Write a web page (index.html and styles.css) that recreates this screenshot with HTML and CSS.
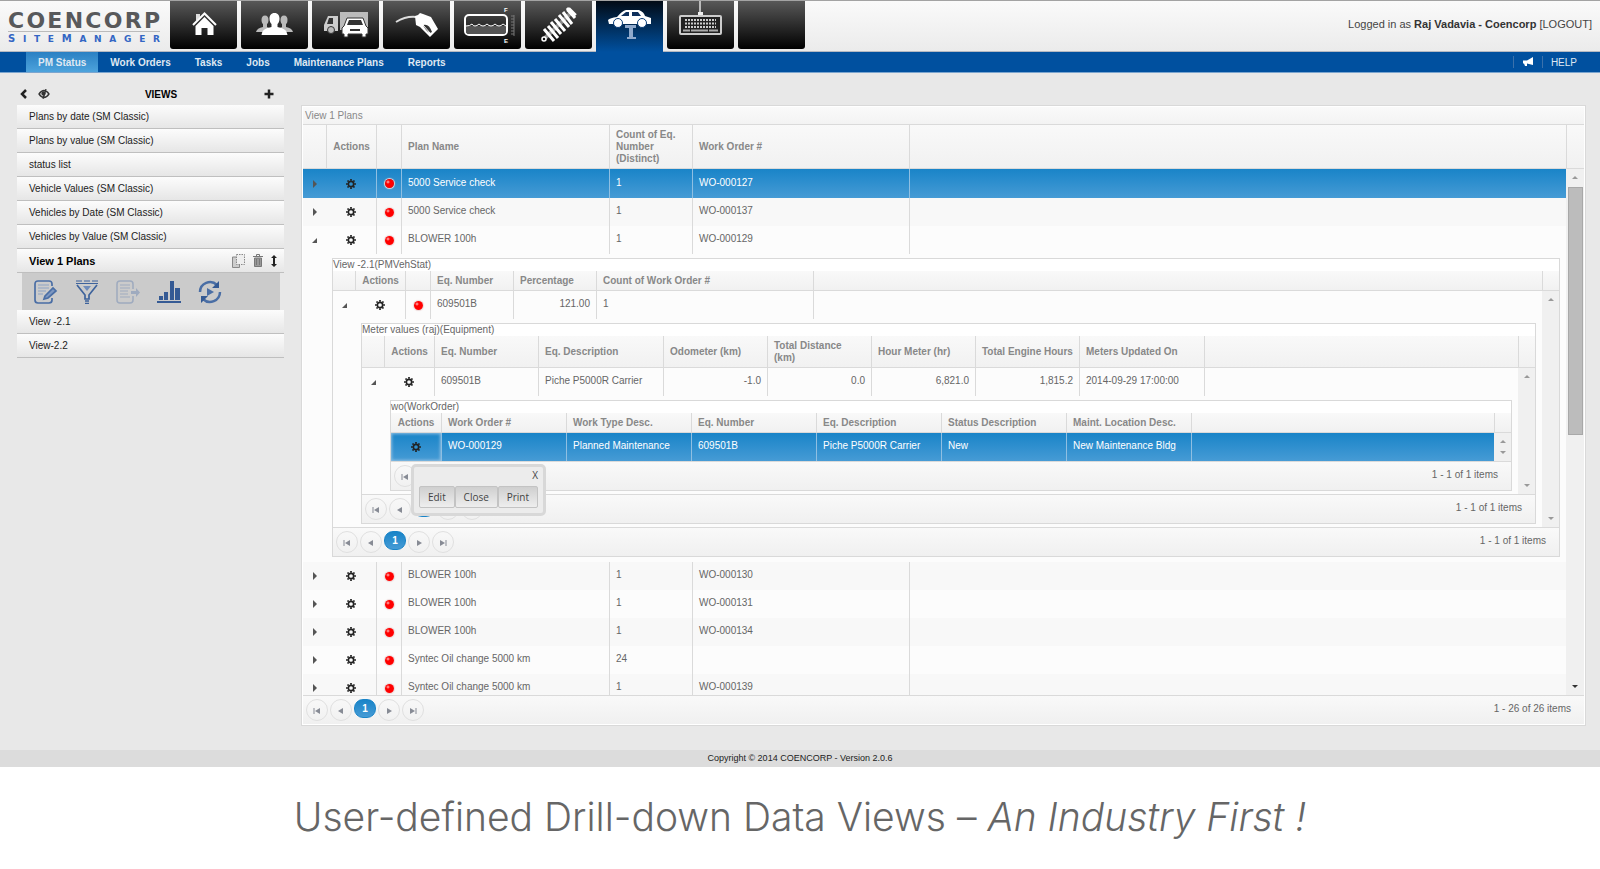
FILE: index.html
```html
<!DOCTYPE html>
<html lang="en">
<head>
    <meta charset="UTF-8">
    <meta name="viewport" content="width=device-width, initial-scale=1.0">
    <title>Coencorp SiteManager - PM Status</title>
    <link rel="stylesheet" href="styles.css">
</head>
<body>
    <!-- Shared icons -->
    <svg width="0" height="0" class="sprite" aria-hidden="true">
        <symbol id="gear" viewBox="0 0 10 10">
            <circle cx="5" cy="5" r="2.7" fill="none" stroke="currentColor" stroke-width="1.7"/>
            <path d="M5 0v1.8M5 8.2V10M0 5h1.8M8.2 5H10M1.5 1.5l1.2 1.2M7.3 7.3l1.2 1.2M1.5 8.5l1.2-1.2M7.3 2.7l1.2-1.2" stroke="currentColor" stroke-width="1.7"/>
        </symbol>
        <symbol id="first" viewBox="0 0 8 8"><path d="M1 1v6" stroke="currentColor"/><path d="M7 1v6L2 4z" fill="currentColor"/></symbol>
        <symbol id="prev" viewBox="0 0 8 8"><path d="M6 1v6L1 4z" fill="currentColor"/></symbol>
        <symbol id="next" viewBox="0 0 8 8"><path d="M2 1v6l5-3z" fill="currentColor"/></symbol>
        <symbol id="last" viewBox="0 0 8 8"><path d="M7 1v6" stroke="currentColor"/><path d="M1 1v6l5-3z" fill="currentColor"/></symbol>
        <symbol id="closed" viewBox="0 0 8 8"><path d="M2 0v8l4-4z" fill="currentColor"/></symbol>
        <symbol id="open" viewBox="0 0 8 8"><path d="M6 2v5H1z" fill="currentColor"/></symbol>
    </svg>

    <header class="header">
        <a class="logo" href="#" aria-label="Coencorp SiteManager">
            <span class="logo-name"><span>C</span><span>O</span><span>E</span><span>N</span><span>C</span><span>O</span><span>R</span><span>P</span></span>
            <span class="logo-product"><span class="big">S</span><span>I</span><span>T</span><span>E</span><span class="big">M</span><span>A</span><span>N</span><span>A</span><span>G</span><span>E</span><span>R</span></span>
        </a>
        <nav class="tiles">
            <a href="#" class="tile" aria-label="Home">
                <svg viewBox="0 0 67 48" fill="#fff">
                    <path d="M26 13h4v3l-4 4z" fill="#ddd"/>
                    <path d="M34.500 16l9 9v9h-6v-7h-6v7h-6v-9z"/>
                    <path d="M23 24l11.500-11.500L46 24" fill="none" stroke="#fff" stroke-width="2"/>
                </svg>
            </a>
            <a href="#" class="tile" aria-label="Users">
                <svg viewBox="0 0 67 48" fill="#bbb">
                    <ellipse cx="24" cy="19" rx="3.500" ry="4.500"/>
                    <ellipse cx="43" cy="19" rx="3.500" ry="4.500"/>
                    <path d="M15 31q1-4 7-5v-4h4v4l3 2-5 3zM52 31q-1-4-7-5v-4h-4v4l-3 2 5 3z"/>
                    <path fill="#fff" d="M33.500 12c3.500 0 5 2.500 5 5.500s-1 4.500-2 5.500v3c5 1 9 2 10 8h-26c1-6 5-7 10-8v-3c-1-1-2-2.500-2-5.500s1.500-5.500 5-5.500z"/>
                </svg>
            </a>
            <a href="#" class="tile" aria-label="Vehicles">
                <svg viewBox="0 0 67 48">
                    <path d="M28 11h28v18H28z" fill="#bbb"/>
                    <path d="M12 24l4-9h10v15H12z" fill="#ccc"/>
                    <path d="M17 17h4v6h-6z" fill="#333"/>
                    <circle cx="19" cy="29" r="3.500" fill="#bbb" stroke="#333"/>
                    <path d="M35 17h16l3 8 2 2v6h-2v3h-4v-3H36v3h-4v-3h-2v-6l2-2z" fill="#fff" stroke="#333"/>
                    <path d="M37 19h12l2 5H35zM38 28h10v2H38z" fill="#333"/>
                </svg>
            </a>
            <a href="#" class="tile" aria-label="Fuel">
                <svg viewBox="0 0 67 48">
                    <path d="M13 21q10-6 20-5" fill="none" stroke="#ddd" stroke-width="2"/>
                    <path d="M32 15l3-1 2-2 3 1 8 3 7 12-8 8-10-10-4-2z" fill="#fff"/>
                    <path d="M40 24q6-2 9 7l-2 1q-5-3-7-8z" fill="#333"/>
                    <path d="M40 24l7 8" stroke="#fff"/>
                </svg>
            </a>
            <a href="#" class="tile" aria-label="Tanks">
                <svg viewBox="0 0 67 48">
                    <rect x="11" y="14" width="42" height="20" rx="4" fill="none" stroke="#fff" stroke-width="2"/>
                    <path d="M12 25h40v5q0 3-3 3H15q-3 0-3-3z" fill="#555"/>
                    <path d="M12 25q4 0 6-2 1 2 3 2t4-2q2 2 4 2t4-2q2 2 4 2t4-2q2 2 4 2t4-2l3 2" fill="none" stroke="#fff"/>
                    <path d="M60 14v21M57 15h3M57 18h3M57 21h3M57 24h3M57 27h3M57 30h3M57 33h3" stroke="#777"/>
                    <text x="50" y="11" class="gauge">F</text>
                    <text x="50" y="42" class="gauge">E</text>
                </svg>
            </a>
            <a href="#" class="tile" aria-label="Parts">
                <svg viewBox="0 0 67 48" fill="none" stroke="#fff">
                    <path d="M20 37L48 10" stroke="#888" stroke-width="4"/>
                    <path d="M19 28l10 12M23 25l10 12M26 21l10 12M30 18l10 12M34 14l10 12M38 11l9 12M42 7l8 10" stroke-width="3"/>
                    <path d="M43 8l7 7" stroke-width="5"/>
                    <circle cx="19" cy="38" r="2" stroke-width="1.500"/>
                </svg>
            </a>
            <a href="#" class="tile active" aria-label="Maintenance">
                <svg viewBox="0 0 67 48">
                    <path d="M29 24h11v3h-3v9h3v2h-9v-2h2v-9h-4z" fill="#8fa9cc"/>
                    <path d="M12 19q2-2 9-3 5-6 9-7h13q5 2 6 6l6 2v6H13z" fill="#fff"/>
                    <path d="M25 15l5-4h3v4zM36 11h6l3 4h-9z" fill="#0d2f5b"/>
                    <circle cx="22" cy="22" r="4.500" fill="#fff" stroke="#073a75"/>
                    <circle cx="46" cy="22" r="4.500" fill="#fff" stroke="#073a75"/>
                </svg>
            </a>
            <a href="#" class="tile" aria-label="Data entry">
                <svg viewBox="0 0 67 48">
                    <path d="M33 0v12" stroke="#bbb" stroke-width="2"/>
                    <path d="M31 11h5v4h-5z" fill="#eee"/>
                    <rect x="13" y="15" width="41" height="18" rx="1" fill="#222" stroke="#ccc" stroke-width="2"/>
                    <path d="M18 19h31M18 22.500h31M18 26h31" stroke="#ccc" stroke-width="2" stroke-dasharray="2 1"/>
                    <path d="M16 29.500h7M24 29.500h17M42 29.500h9" stroke="#aaa" stroke-width="2"/>
                </svg>
            </a>
            <a href="#" class="tile" aria-label="More"></a>
        </nav>
        <div class="user">Logged in as <b>Raj Vadavia - Coencorp</b> <a href="#">[LOGOUT]</a></div>
    </header>

    <nav class="menu">
        <a href="#" class="active">PM Status</a>
        <a href="#">Work Orders</a>
        <a href="#">Tasks</a>
        <a href="#">Jobs</a>
        <a href="#">Maintenance Plans</a>
        <a href="#">Reports</a>
        <div class="menu-right">
            <a href="#" aria-label="Announcements">
                <svg width="12" height="10" viewBox="0 0 12 10" fill="#fff"><path d="M11 0v8L5 6.500V9H3L2 6.500H1v-3h4z"/></svg>
            </a>
            <a href="#">HELP</a>
        </div>
    </nav>

    <main class="main">
        <aside class="sidebar">
            <div class="sidebar-head">
                <button type="button" aria-label="Collapse"><svg width="8" height="10" viewBox="0 0 8 10"><path d="M6 1L2 5l4 4" fill="none" stroke="#222" stroke-width="2.500"/></svg></button>
                <button type="button" aria-label="Hide"><svg width="12" height="10" viewBox="0 0 12 10" fill="none" stroke="#333" stroke-width="1.300"><path d="M1 5q2.500-3.500 5-3.500T11 5Q8.500 8.500 6 8.500T1 5zM8 0L5 10"/><circle cx="5.500" cy="4.500" r="1.500" fill="#333"/></svg></button>
                <h2>VIEWS</h2>
                <button type="button" aria-label="Add view"><svg width="10" height="10" viewBox="0 0 10 10"><path d="M5 .5v9M.5 5h9" stroke="#222" stroke-width="2.500"/></svg></button>
            </div>
            <ul class="views">
                <li><a href="#">Plans by date (SM Classic)</a></li>
                <li><a href="#">Plans by value (SM Classic)</a></li>
                <li><a href="#">status list</a></li>
                <li><a href="#">Vehicle Values (SM Classic)</a></li>
                <li><a href="#">Vehicles by Date (SM Classic)</a></li>
                <li><a href="#">Vehicles by Value (SM Classic)</a></li>
                <li class="current">
                    <a href="#">View 1 Plans</a>
                    <button type="button" aria-label="Copy"><svg width="13" height="14" viewBox="0 0 13 14" fill="none" stroke="#888"><path d="M4 3H.5v10.500h7V11" fill="#ccc"/><path d="M4.500.5h8v10h-8z" fill="#eee" stroke-dasharray="1.500 1"/></svg></button>
                    <button type="button" aria-label="Delete"><svg width="10" height="13" viewBox="0 0 10 13" fill="none" stroke="#777"><path d="M0 2.500h10M3.500 2V.5h3V2"/><path d="M1.500 4h7v8.500h-7z" fill="#999"/><path d="M3.500 5v6M6.500 5v6"/></svg></button>
                    <button type="button" aria-label="Move"><svg width="6" height="12" viewBox="0 0 6 12" fill="#222"><path d="M3 0l3 3H4v6h2l-3 3-3-3h2V3H0z"/></svg></button>
                </li>
                <li class="tools">
                    <button type="button" aria-label="Edit">
                        <svg width="24" height="24" viewBox="0 0 24 24" fill="none" stroke="#4a6ea5" stroke-width="1.700">
                            <path d="M18 6V4q0-3-3-3H4Q1 1 1 4v16q0 3 3 3h11q3 0 3-3v-2"/>
                            <path d="M4 5h11M4 8h11M4 11h8M4 14h5" stroke="#8da3c4" stroke-width="1"/>
                            <path d="M11 16l8-8 3 3-8 7-4 1z" fill="#7d97c0"/>
                        </svg>
                    </button>
                    <button type="button" aria-label="Filter">
                        <svg width="24" height="24" viewBox="0 0 24 24" fill="none" stroke="#3e639c" stroke-width="1.700">
                            <path d="M1 1h6M9 1h6M17 1h6M1 3.500h22" stroke-width="1"/>
                            <path d="M2 5l8 10v4h4v-4l8-10M10 21h4M10 23.500h4"/>
                            <path d="M8 6h8l-4 5z" fill="#6f8cba" stroke="none"/>
                        </svg>
                    </button>
                    <button type="button" aria-label="Export" disabled>
                        <svg width="24" height="24" viewBox="0 0 24 24" fill="none" stroke="#9fabbf" stroke-width="1.500">
                            <path d="M17 9V4q0-3-3-3H4Q1 1 1 4v16q0 3 3 3h10q3 0 3-3v-4"/>
                            <path d="M4 5h10M4 8h10M4 11h8M4 14h8M4 17h10" stroke-width="1"/>
                            <path d="M15 11h5V8l4 4.500-4 4.500v-3h-5z" fill="#9fabbf" stroke="none"/>
                        </svg>
                    </button>
                    <button type="button" aria-label="Chart">
                        <svg width="24" height="24" viewBox="0 0 24 24" fill="#355a94"><path d="M0 21h24v2H0zM2 16h4v4H2zM7 12h4v8H7zM13 1h4v19h-4zM18 8h5v12h-5z"/></svg>
                    </button>
                    <button type="button" aria-label="Run">
                        <svg width="24" height="24" viewBox="0 0 24 24" fill="none" stroke="#4a6ea5" stroke-width="2.500">
                            <path d="M2 12A10 10 0 0 1 19 5M22 12A10 10 0 0 1 5 19"/>
                            <path d="M21 1v7h-7zM3 23v-7h7z" fill="#355a94" stroke="none"/>
                            <path d="M9 8l7 4-7 4z" fill="#4a6ea5" stroke="none"/>
                        </svg>
                    </button>
                </li>
                <li><a href="#">View -2.1</a></li>
                <li><a href="#">View-2.2</a></li>
            </ul>
        </aside>

        <section class="grid grid-plans">
            <div class="grid-title">View 1 Plans</div>
            <div class="grid-head">
                <table>
                    <colgroup><col class="w23"><col class="w50"><col class="w25"><col class="w208"><col class="w83"><col class="w217"><col></colgroup>
                    <tr><th></th><th class="c">Actions</th><th></th><th>Plan Name</th><th>Count of Eq. Number (Distinct)</th><th>Work Order #</th><th></th></tr>
                </table>
                <div class="gap"></div>
            </div>
            <div class="grid-body">
                <table>
                    <colgroup><col class="w23"><col class="w50"><col class="w25"><col class="w208"><col class="w83"><col class="w217"><col></colgroup>
                    <tr class="selected">
                        <td class="exp"><svg><use href="#closed"/></svg></td><td class="act"><svg><use href="#gear"/></svg></td><td class="st"><i class="dot"></i></td>
                        <td>5000 Service check</td><td>1</td><td>WO-000127</td><td></td>
                    </tr>
                    <tr class="alt">
                        <td class="exp"><svg><use href="#closed"/></svg></td><td class="act"><svg><use href="#gear"/></svg></td><td class="st"><i class="dot"></i></td>
                        <td>5000 Service check</td><td>1</td><td>WO-000137</td><td></td>
                    </tr>
                    <tr>
                        <td class="exp"><svg><use href="#open"/></svg></td><td class="act"><svg><use href="#gear"/></svg></td><td class="st"><i class="dot"></i></td>
                        <td>BLOWER 100h</td><td>1</td><td>WO-000129</td><td></td>
                    </tr>
                    <tr class="detail">
                        <td></td>
                        <td colspan="6">
                            <!-- Vehicle status -->
                            <div class="grid nested">
                                <div class="grid-title">View -2.1(PMVehStat)</div>
                                <div class="grid-head">
                                    <table>
                                        <colgroup><col class="w22"><col class="w50"><col class="w25"><col class="w83"><col class="w83"><col class="w217"><col></colgroup>
                                        <tr><th></th><th class="c">Actions</th><th></th><th>Eq. Number</th><th>Percentage</th><th>Count of Work Order #</th><th></th></tr>
                                    </table>
                                    <div class="gap"></div>
                                </div>
                                <div class="grid-body">
                                    <table>
                                        <colgroup><col class="w22"><col class="w50"><col class="w25"><col class="w83"><col class="w83"><col class="w217"><col></colgroup>
                                        <tr>
                                            <td class="exp"><svg><use href="#open"/></svg></td><td class="act"><svg><use href="#gear"/></svg></td><td class="st"><i class="dot"></i></td>
                                            <td>609501B</td><td class="num">121.00</td><td>1</td><td></td>
                                        </tr>
                                        <tr class="detail">
                                            <td></td>
                                            <td colspan="6">
                                                <!-- Meter values -->
                                                <div class="grid nested">
                                                    <div class="grid-title">Meter values (raj)(Equipment)</div>
                                                    <div class="grid-head tall">
                                                        <table>
                                                            <colgroup><col class="w22"><col class="w50"><col class="w104"><col class="w125"><col class="w104"><col class="w104"><col class="w104"><col class="w104"><col class="w125"><col></colgroup>
                                                            <tr><th></th><th class="c">Actions</th><th>Eq. Number</th><th>Eq. Description</th><th>Odometer (km)</th><th>Total Distance (km)</th><th>Hour Meter (hr)</th><th>Total Engine Hours</th><th>Meters Updated On</th><th></th></tr>
                                                        </table>
                                                        <div class="gap"></div>
                                                    </div>
                                                    <div class="grid-body">
                                                        <table>
                                                            <colgroup><col class="w22"><col class="w50"><col class="w104"><col class="w125"><col class="w104"><col class="w104"><col class="w104"><col class="w104"><col class="w125"><col></colgroup>
                                                            <tr>
                                                                <td class="exp"><svg><use href="#open"/></svg></td><td class="act"><svg><use href="#gear"/></svg></td>
                                                                <td>609501B</td><td>Piche P5000R Carrier</td><td class="num">-1.0</td><td class="num">0.0</td><td class="num">6,821.0</td><td class="num">1,815.2</td><td>2014-09-29 17:00:00</td><td></td>
                                                            </tr>
                                                            <tr class="detail">
                                                                <td></td>
                                                                <td colspan="9">
                                                                    <!-- Work orders -->
                                                                    <div class="grid nested">
                                                                        <div class="grid-title">wo(WorkOrder)</div>
                                                                        <div class="grid-head">
                                                                            <table>
                                                                                <colgroup><col class="w50"><col class="w125"><col class="w125"><col class="w125"><col class="w125"><col class="w125"><col class="w125"><col></colgroup>
                                                                                <tr><th class="c">Actions</th><th>Work Order #</th><th>Work Type Desc.</th><th>Eq. Number</th><th>Eq. Description</th><th>Status Description</th><th>Maint. Location Desc.</th><th></th></tr>
                                                                            </table>
                                                                            <div class="gap"></div>
                                                                        </div>
                                                                        <div class="grid-body">
                                                                            <table>
                                                                                <colgroup><col class="w50"><col class="w125"><col class="w125"><col class="w125"><col class="w125"><col class="w125"><col class="w125"><col></colgroup>
                                                                                <tr class="selected">
                                                                                    <td class="act focused">
                                                                                        <svg><use href="#gear"/></svg>
                                                                                        <div class="popup">
                                                                                            <button type="button" class="popup-close">X</button>
                                                                                            <div class="popup-buttons"><button type="button">Edit</button><button type="button">Close</button><button type="button">Print</button></div>
                                                                                        </div>
                                                                                    </td>
                                                                                    <td>WO-000129</td><td>Planned Maintenance</td><td>609501B</td><td>Piche P5000R Carrier</td><td>New</td><td>New Maintenance Bldg</td><td></td>
                                                                                </tr>
                                                                            </table>
                                                                            <div class="scroll"><i class="up"></i><i class="down"></i></div>
                                                                        </div>
                                                                        <div class="pager">
                                                                            <button type="button" aria-label="First"><svg><use href="#first"/></svg></button>
                                                                            <span>1 - 1 of 1 items</span>
                                                                        </div>
                                                                    </div>
                                                                </td>
                                                            </tr>
                                                        </table>
                                                        <div class="scroll"><i class="up"></i><i class="down"></i></div>
                                                    </div>
                                                    <div class="pager">
                                                        <button type="button" aria-label="First"><svg><use href="#first"/></svg></button>
                                                        <button type="button" aria-label="Previous"><svg><use href="#prev"/></svg></button>
                                                        <button type="button" class="page" aria-label="Page 1"></button>
                                                        <button type="button" aria-label="Next"></button>
                                                        <button type="button" aria-label="Last"></button>
                                                        <span>1 - 1 of 1 items</span>
                                                    </div>
                                                </div>
                                            </td>
                                        </tr>
                                    </table>
                                    <div class="scroll"><i class="up"></i><i class="down"></i></div>
                                </div>
                                <div class="pager">
                                    <button type="button" aria-label="First"><svg><use href="#first"/></svg></button>
                                    <button type="button" aria-label="Previous"><svg><use href="#prev"/></svg></button>
                                    <button type="button" class="page">1</button>
                                    <button type="button" aria-label="Next"><svg><use href="#next"/></svg></button>
                                    <button type="button" aria-label="Last"><svg><use href="#last"/></svg></button>
                                    <span>1 - 1 of 1 items</span>
                                </div>
                            </div>
                        </td>
                    </tr>
                    <tr class="alt">
                        <td class="exp"><svg><use href="#closed"/></svg></td><td class="act"><svg><use href="#gear"/></svg></td><td class="st"><i class="dot"></i></td>
                        <td>BLOWER 100h</td><td>1</td><td>WO-000130</td><td></td>
                    </tr>
                    <tr>
                        <td class="exp"><svg><use href="#closed"/></svg></td><td class="act"><svg><use href="#gear"/></svg></td><td class="st"><i class="dot"></i></td>
                        <td>BLOWER 100h</td><td>1</td><td>WO-000131</td><td></td>
                    </tr>
                    <tr class="alt">
                        <td class="exp"><svg><use href="#closed"/></svg></td><td class="act"><svg><use href="#gear"/></svg></td><td class="st"><i class="dot"></i></td>
                        <td>BLOWER 100h</td><td>1</td><td>WO-000134</td><td></td>
                    </tr>
                    <tr>
                        <td class="exp"><svg><use href="#closed"/></svg></td><td class="act"><svg><use href="#gear"/></svg></td><td class="st"><i class="dot"></i></td>
                        <td>Syntec Oil change 5000 km</td><td>24</td><td></td><td></td>
                    </tr>
                    <tr class="alt">
                        <td class="exp"><svg><use href="#closed"/></svg></td><td class="act"><svg><use href="#gear"/></svg></td><td class="st"><i class="dot"></i></td>
                        <td>Syntec Oil change 5000 km</td><td>1</td><td>WO-000139</td><td></td>
                    </tr>
                </table>
                <div class="scroll"><i class="up"></i><div class="thumb"></div><i class="down dark"></i></div>
            </div>
            <div class="pager">
                <button type="button" aria-label="First"><svg><use href="#first"/></svg></button>
                <button type="button" aria-label="Previous"><svg><use href="#prev"/></svg></button>
                <button type="button" class="page">1</button>
                <button type="button" aria-label="Next"><svg><use href="#next"/></svg></button>
                <button type="button" aria-label="Last"><svg><use href="#last"/></svg></button>
                <span>1 - 26 of 26 items</span>
            </div>
        </section>
    </main>

    <footer class="footer">Copyright © 2014 COENCORP - Version 2.0.6</footer>

    <p class="slogan">User-defined Drill-down Data Views – <em>An Industry First !</em></p>
</body>
</html>
```
FILE: styles.css
```css
* {
    box-sizing: border-box;
}

body {
    margin: 0;
    background: #fff;
    font-family: Arial, "Liberation Sans", sans-serif;
    font-size: 10px;
    color: #222;
}

a {
    color: inherit;
    text-decoration: none;
}

button {
    padding: 0;
    border: none;
    background: none;
    color: inherit;
    font: inherit;
    cursor: pointer;
}

svg {
    display: block;
}

.sprite {
    position: absolute;
}

/* Header */
.header {
    display: flex;
    height: 52px;
    border-top: 1px solid #a3a3a3;
    border-bottom: 1px solid #b4b9c2;
    background: linear-gradient(#fafafa, #ebebeb);
}

.logo {
    width: 170px;
    padding: 10px 10px 0 8px;
}

.logo-name,
.logo-product {
    display: flex;
    justify-content: space-between;
    font-family: "DejaVu Sans", sans-serif;
}

.logo-name {
    height: 21px;
    border-bottom: 1px solid #bbb;
    font-size: 22px;
    line-height: 19px;
    font-weight: bold;
    color: #58595b;
}

.logo-product {
    align-items: baseline;
    font-size: 9px;
    line-height: 14px;
    font-weight: bold;
    color: #3366c4;
}

.logo-product .big {
    font-size: 10px;
}

.tiles {
    display: flex;
    align-items: flex-start;
    gap: 4px;
}

.tile {
    width: 67px;
    height: 48px;
    border-radius: 0 0 3px 3px;
    background: linear-gradient(#585858, #000);
}

.tile.active {
    height: 51px;
    border-radius: 0;
    background: linear-gradient(#020b16, #00509f);
}

.gauge {
    font-size: 6px;
    font-weight: bold;
    fill: #fff;
}

.user {
    margin-left: auto;
    padding-right: 8px;
    font-size: 11px;
    line-height: 47px;
    color: #444;
}

.user b {
    color: #333;
}

/* Menu bar */
.menu {
    display: flex;
    height: 21px;
    padding-left: 26px;
    border-bottom: 1px solid #7ba5cf;
    background: #00509f;
    color: #dfe8f2;
    font-weight: bold;
    line-height: 21px;
}

.menu > a {
    padding: 0 12px;
}

.menu > a.active {
    background: linear-gradient(#2a80c3, #4da3dc);
}

.menu-right {
    display: flex;
    align-items: center;
    margin-left: auto;
    padding-right: 15px;
    font-weight: normal;
}

.menu-right a {
    display: flex;
    align-items: center;
    height: 12px;
    padding: 0 8px;
    border-left: 1px solid #3b71ab;
}

/* Main area */
.main {
    display: flex;
    align-items: flex-start;
    gap: 17px;
    padding: 13px 14px 24px 17px;
    background: #e8e8e8;
}

.sidebar {
    flex: 0 0 267px;
}

.sidebar-head {
    display: flex;
    align-items: center;
    gap: 10px;
    height: 19px;
    padding: 0 10px 4px 3px;
}

.sidebar-head h2 {
    flex: 1;
    margin: 2px 0 0;
    padding-left: 8px;
    font-size: 10px;
    line-height: 12px;
    text-align: center;
    color: #000;
}

.views {
    margin: 0;
    padding: 0;
    list-style: none;
}

.views li {
    display: flex;
    align-items: center;
    gap: 8px;
    height: 24px;
    padding: 0 7px 0 12px;
    border-bottom: 1px solid #bfbfbf;
    background: linear-gradient(#fcfcfc, #e6e6e6);
}

.views a {
    flex: 1;
}

.views .current a {
    font-size: 11px;
    font-weight: bold;
    color: #000;
}

.views .tools {
    gap: 17px;
    height: 37px;
    margin: 0 4px 0 5px;
    padding: 0 12px;
    border: none;
    background: #cbcbcb;
}

/* Grids */
.grid {
    flex: 1;
    min-width: 0;
    border: 1px solid #d9d9d9;
    background: #fcfcfc;
    color: #666;
}

.grid-plans {
    margin-top: 19px;
    box-shadow: inset 0 0 0 1px #fff;
    padding: 1px;
}

.grid-title {
    line-height: 12px;
    background: #fff;
}

.grid-plans > .grid-title {
    padding: 3px 2px 2px;
    border-bottom: 1px solid #dadada;
    background: linear-gradient(#fafafa, #f3f3f3);
    color: #888;
}

.grid-head,
.grid-body {
    display: flex;
}

.grid-head {
    height: 20px;
    border-bottom: 1px solid #dadada;
    background: linear-gradient(#f9f9f9, #f1f1f1);
}

.grid-plans > .grid-head {
    height: 44px;
}

.grid-head.tall {
    height: 32px;
}

.gap,
.scroll {
    flex: 0 0 17px;
}

.gap {
    border-left: 1px solid #dadada;
}

.grid-plans > .grid-head > .gap,
.grid-plans > .grid-body > .scroll {
    flex-basis: 18px;
}

table {
    flex: 1;
    width: 100%;
    min-width: 0;
    table-layout: fixed;
    border-collapse: separate;
    border-spacing: 0;
}

.w22 { width: 22px; }
.w23 { width: 23px; }
.w25 { width: 25px; }
.w50 { width: 50px; }
.w83 { width: 83px; }
.w104 { width: 104px; }
.w125 { width: 125px; }
.w208 { width: 208px; }
.w217 { width: 217px; }

th,
td {
    padding: 0 6px;
    border-left: 1px solid #dadada;
    text-align: left;
    line-height: 12px;
}

th {
    color: #888;
}

th:first-child,
td:first-child,
td.exp + td {
    border-left: none;
}

th.c {
    padding: 0;
    text-align: center;
}

td {
    height: 28px;
    padding-bottom: 2px;
}

td.exp,
td.act,
td.st {
    padding: 0;
}

td.exp svg {
    width: 8px;
    height: 8px;
    margin-left: 8px;
    color: #555;
}

td.act svg {
    width: 10px;
    height: 10px;
    margin: 0 auto;
    color: #222;
}

td.num {
    text-align: right;
}

.dot {
    display: block;
    width: 9px;
    height: 9px;
    margin: 0 auto;
    border-radius: 50%;
    background: radial-gradient(circle at 3px 3px, #ffc0c0, #ff0000 2px);
    box-shadow: 0 0 1px 1px #ecd8d8;
}

tr.alt {
    background: #f8f8f8;
}

tr.selected {
    background: linear-gradient(#1984c8, #469bd5);
    color: #fff;
}

.selected td {
    border-color: #8fbfe2;
}

.grid-plans > .grid-body > table > * > .selected > td {
    height: 29px;
}

td.focused {
    position: relative;
    box-shadow: inset 0 0 3px 1px #8fbfe2;
}

tr.detail > td {
    height: auto;
    padding: 4px 6px 3px;
    border: none;
}

.grid-plans > .grid-body > table > * > .detail > td {
    padding-bottom: 5px;
}

.grid-plans > .grid-body {
    height: 526px;
    overflow: hidden;
}

.grid-plans > .grid-body > table {
    align-self: flex-start;
}

/* Scroll bars */
.scroll {
    display: flex;
    flex-direction: column;
    justify-content: space-between;
    align-items: center;
    padding: 7px 0;
    background: #f0f0f0;
}

.scroll i {
    border: 3px solid transparent;
}

.scroll .up {
    border-top: none;
    border-bottom-color: #999;
}

.scroll .down {
    border-bottom: none;
    border-top-color: #999;
}

.scroll .dark {
    border-top-color: #333;
}

.thumb {
    width: 15px;
    height: 248px;
    margin: 8px 0 auto;
    border: 1px solid #a8a8a8;
    background: #bcbcbc;
}

/* Pager */
.pager {
    display: flex;
    align-items: flex-start;
    gap: 2px;
    height: 29px;
    padding: 3px 13px 0 3px;
    border-top: 1px solid #dadada;
    background: linear-gradient(#f9f9f9, #f0f0f0);
}

.pager button {
    width: 22px;
    height: 22px;
    border: 1px solid #e0e0e0;
    border-radius: 50%;
    color: #878b95;
}

.pager svg {
    width: 8px;
    height: 8px;
    margin: 2px auto 0;
}

.pager .page {
    height: 19px;
    border: 1px solid #1984c8;
    border-radius: 9px;
    background: linear-gradient(#1984c8, #469bd5);
    color: #fff;
    font-weight: bold;
}

.pager span {
    margin-left: auto;
    line-height: 20px;
}

/* Action popup */
.popup {
    position: absolute;
    z-index: 2;
    top: 31px;
    left: 20px;
    width: 135px;
    height: 52px;
    padding: 2px 5px;
    border: 3px solid #d8d8d8;
    border-radius: 5px;
    background: #ececec;
    color: #444;
    font-family: "Open Sans", sans-serif;
}

.popup-close {
    display: block;
    margin-left: auto;
    line-height: 12px;
}

.popup-buttons {
    display: flex;
    margin-top: 5px;
}

.popup-buttons button {
    flex: 1 1 auto;
    height: 22px;
    border: 1px solid #c3c3c3;
    border-radius: 2px;
    background: linear-gradient(#cfcfcf, #eee);
}

/* Footer */
.footer {
    background: #dcdcdc;
    font-size: 9px;
    line-height: 17px;
    text-align: center;
}

.slogan {
    margin: 24px 0;
    font-family: Inter, "Liberation Sans", sans-serif;
    font-size: 39px;
    font-weight: 300;
    line-height: 52px;
    text-align: center;
    color: #666;
}
```
